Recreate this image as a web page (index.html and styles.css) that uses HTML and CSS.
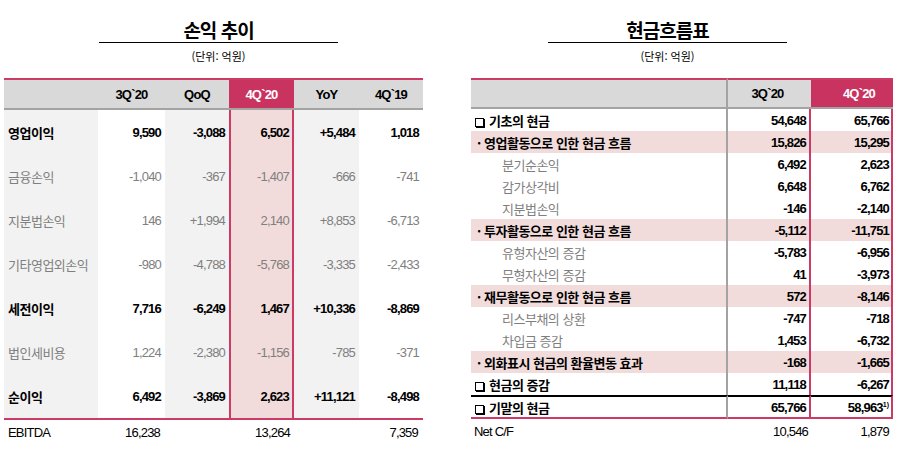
FILE: index.html
```html
<!DOCTYPE html>
<html lang="ko">
<head>
<meta charset="utf-8">
<link rel="stylesheet" href="styles.css">
</head>
<body>
<div class="page">
  <section class="panel panel-left">
    <div class="heading heading-left">
      <h2 class="title">손익 추이</h2>
      <div class="unit">(단위: 억원)</div>
    </div>
    <table class="pl">
      <colgroup>
        <col class="c-label"><col class="c-a"><col class="c-b"><col class="c-c"><col class="c-d"><col class="c-e">
      </colgroup>
      <thead>
        <tr>
          <th class="lab"></th>
          <th>3Q`20</th>
          <th class="alt">QoQ</th>
          <th class="hl">4Q`20</th>
          <th class="alt">YoY</th>
          <th>4Q`19</th>
        </tr>
      </thead>
      <tbody>
        <tr class="strong"><td class="lab">영업이익</td><td>9,590</td><td class="alt">-3,088</td><td class="hl">6,502</td><td class="alt">+5,484</td><td>1,018</td></tr>
        <tr class="weak"><td class="lab">금융손익</td><td>-1,040</td><td class="alt">-367</td><td class="hl">-1,407</td><td class="alt">-666</td><td>-741</td></tr>
        <tr class="weak"><td class="lab">지분법손익</td><td>146</td><td class="alt">+1,994</td><td class="hl">2,140</td><td class="alt">+8,853</td><td>-6,713</td></tr>
        <tr class="weak"><td class="lab">기타영업외손익</td><td>-980</td><td class="alt">-4,788</td><td class="hl">-5,768</td><td class="alt">-3,335</td><td>-2,433</td></tr>
        <tr class="strong"><td class="lab">세전이익</td><td>7,716</td><td class="alt">-6,249</td><td class="hl">1,467</td><td class="alt">+10,336</td><td>-8,869</td></tr>
        <tr class="weak"><td class="lab">법인세비용</td><td>1,224</td><td class="alt">-2,380</td><td class="hl">-1,156</td><td class="alt">-785</td><td>-371</td></tr>
        <tr class="strong last"><td class="lab">순이익</td><td>6,492</td><td class="alt">-3,869</td><td class="hl">2,623</td><td class="alt">+11,121</td><td>-8,498</td></tr>
      </tbody>
    </table>
    <div class="foot foot-left">
      <span class="foot-label">EBITDA</span>
      <span class="fa">16,238</span>
      <span class="fb"></span>
      <span class="fc">13,264</span>
      <span class="fd"></span>
      <span class="fe">7,359</span>
    </div>
  </section>

  <section class="panel panel-right">
    <div class="heading heading-right">
      <h2 class="title">현금흐름표</h2>
      <div class="unit">(단위: 억원)</div>
    </div>
    <table class="cf">
      <colgroup>
        <col class="k-label"><col class="k-a"><col class="k-b">
      </colgroup>
      <thead>
        <tr>
          <th class="lab"></th>
          <th class="q3">3Q`20</th>
          <th class="hl">4Q`20</th>
        </tr>
      </thead>
      <tbody>
        <tr class="box"><td class="lab"><span class="sq"></span>기초의 현금</td><td class="q3">54,648</td><td class="hl">65,766</td></tr>
        <tr class="sec"><td class="lab"><span class="dot">·</span>영업활동으로 인한 현금 흐름</td><td class="q3">15,826</td><td class="hl">15,295</td></tr>
        <tr class="sub"><td class="lab">분기순손익</td><td class="q3">6,492</td><td class="hl">2,623</td></tr>
        <tr class="sub"><td class="lab">감가상각비</td><td class="q3">6,648</td><td class="hl">6,762</td></tr>
        <tr class="sub"><td class="lab">지분법손익</td><td class="q3">-146</td><td class="hl">-2,140</td></tr>
        <tr class="sec"><td class="lab"><span class="dot">·</span>투자활동으로 인한 현금 흐름</td><td class="q3">-5,112</td><td class="hl">-11,751</td></tr>
        <tr class="sub"><td class="lab">유형자산의 증감</td><td class="q3">-5,783</td><td class="hl">-6,956</td></tr>
        <tr class="sub"><td class="lab">무형자산의 증감</td><td class="q3">41</td><td class="hl">-3,973</td></tr>
        <tr class="sec"><td class="lab"><span class="dot">·</span>재무활동으로 인한 현금 흐름</td><td class="q3">572</td><td class="hl">-8,146</td></tr>
        <tr class="sub"><td class="lab">리스부채의 상환</td><td class="q3">-747</td><td class="hl">-718</td></tr>
        <tr class="sub"><td class="lab">차입금 증감</td><td class="q3">1,453</td><td class="hl">-6,732</td></tr>
        <tr class="sec"><td class="lab"><span class="dot">·</span>외화표시 현금의 환율변동 효과</td><td class="q3">-168</td><td class="hl">-1,665</td></tr>
        <tr class="box"><td class="lab"><span class="sq"></span>현금의 증감</td><td class="q3">11,118</td><td class="hl">-6,267</td></tr>
        <tr class="box end"><td class="lab"><span class="sq"></span>기말의 현금</td><td class="q3">65,766</td><td class="hl">58,963<sup class="fn">1)</sup></td></tr>
      </tbody>
    </table>
    <div class="foot foot-right">
      <span class="foot-label">Net C/F</span>
      <span class="ka">10,546</span>
      <span class="kb">1,879</span>
    </div>
  </section>
</div>
</body>
</html>
```

FILE: styles.css
```css
* { box-sizing: border-box; }

body {
  margin: 0;
  background: #ffffff;
  color: #000000;
  font-family: "Liberation Sans", "Noto Sans CJK KR", sans-serif;
}

.page {
  display: flex;
  gap: 48px;
  padding-left: 4px;
}

.panel-left { width: 419px; }
.panel-right { width: 422px; }

.heading {
  width: 239px;
  padding-top: 18px;
  display: flex;
  flex-direction: column;
  align-items: center;
}
.heading-left { margin-left: 95px; }
.heading-right { margin-left: 77px; }

.title {
  margin: 0;
  width: 100%;
  text-align: center;
  font-family: "Noto Sans CJK KR", sans-serif;
  font-weight: 700;
  font-size: 19px;
  line-height: 24px;
  letter-spacing: -1px;
  border-bottom: 1px solid #000;
}

.unit {
  margin-top: 6px;
  font-family: "Noto Sans CJK KR", sans-serif;
  font-size: 11px;
  line-height: 14px;
  letter-spacing: 0;
}

table {
  border-collapse: separate;
  border-spacing: 0;
  table-layout: fixed;
  margin-top: 15px;
  font-size: 13px;
  letter-spacing: -0.8px;
}

th, td { padding: 0; }

/* ---------- Left table ---------- */
.pl { width: 419px; }
.pl .c-label { width: 94px; }
.pl .c-a { width: 67px; }
.pl .c-b { width: 64px; }
.pl .c-c { width: 65px; }
.pl .c-d { width: 65px; }
.pl .c-e { width: 64px; }

.pl th {
  height: 32px;
  background: #d9d9d9;
  border-top: 2px solid #cc3a66;
  border-bottom: 2px solid #a3a3a3;
  font-weight: 700;
  text-align: center;
}
.pl th.hl {
  background: #c9335f;
  color: #ffffff;
}

.pl td {
  height: 44px;
  text-align: right;
  padding-right: 4px;
}
.pl td.lab {
  text-align: left;
  padding-left: 4px;
  background: #f2f2f2;
  font-family: "Noto Sans CJK KR", sans-serif;
  font-size: 13px;
  letter-spacing: -0.5px;
  white-space: nowrap;
}
.pl td.alt { background: #f2f2f2; }
.pl td.hl {
  background: #f2dcdb;
  border-left: 2px solid #cc3a66;
  border-right: 2px solid #cc3a66;
  padding-right: 3px;
}
.pl tr.strong td { font-weight: 700; color: #000; }
.pl tr.weak td { color: #7f7f7f; }
.pl tr.last td { border-bottom: 2px solid #cc3a66; height: 46px; }

.foot {
  display: flex;
  height: 24px;
  align-items: center;
  font-size: 13px;
  letter-spacing: -0.8px;
}
.foot span { text-align: right; }
.foot .foot-label { text-align: left; }

.foot-left .foot-label { width: 94px; padding-left: 4px; }
.foot-left .fa { width: 67px; padding-right: 5px; }
.foot-left .fb { width: 64px; }
.foot-left .fc { width: 65px; padding-right: 4px; }
.foot-left .fd { width: 65px; }
.foot-left .fe { width: 64px; padding-right: 5px; }

/* ---------- Right table ---------- */
.cf { width: 422px; }
.cf .k-label { width: 257px; }
.cf .k-a { width: 83px; }
.cf .k-b { width: 82px; }

.cf th {
  height: 31px;
  background: #d9d9d9;
  border-top: 2px solid #cc3a66;
  border-bottom: 2px solid #a3a3a3;
  font-weight: 700;
  text-align: center;
}
.cf th.lab { border-right: 2px solid #a3a3a3; }
.cf th.q3 { padding-right: 4px; }
.cf th.hl {
  background: #c9335f;
  color: #ffffff;
  padding-left: 14px;
}

.cf td {
  height: 22px;
  text-align: right;
  font-weight: 700;
  padding-right: 3px;
}
.cf td.lab {
  text-align: left;
  font-family: "Noto Sans CJK KR", sans-serif;
  font-size: 13px;
  letter-spacing: -0.5px;
  border-right: 2px solid #a3a3a3;
  white-space: nowrap;
}
.cf td.q3 { border-right: 2px solid #cc3a66; }
.cf td.hl { border-right: 2px solid #cc3a66; padding-right: 2px; }

.cf tr.box td.lab { padding-left: 4px; }
.cf tr.sec td { background: #f2dcdb; }
.cf tr.sec td.lab { padding-left: 6px; }
.cf tr.sub td.lab {
  padding-left: 31px;
  color: #7f7f7f;
  font-weight: 400;
}

.dot {
  display: inline-block;
  width: 7px;
  font-weight: 700;
}

.sq {
  display: inline-block;
  width: 9px;
  height: 9px;
  border: 1.5px solid #000;
  box-shadow: 1px 1px 0 #000;
  margin-right: 5px;
  vertical-align: -1px;
}

.cf tr.end td {
  border-top: 2px solid #000;
  border-bottom: 2px solid #cc3a66;
  height: 24px;
}

.fn {
  font-size: 7px;
  vertical-align: 5px;
  line-height: 0;
  letter-spacing: 0;
}

.foot-right .foot-label { width: 257px; padding-left: 3px; }
.foot-right .ka { width: 83px; padding-right: 3px; }
.foot-right .kb { width: 82px; padding-right: 4px; }
```
